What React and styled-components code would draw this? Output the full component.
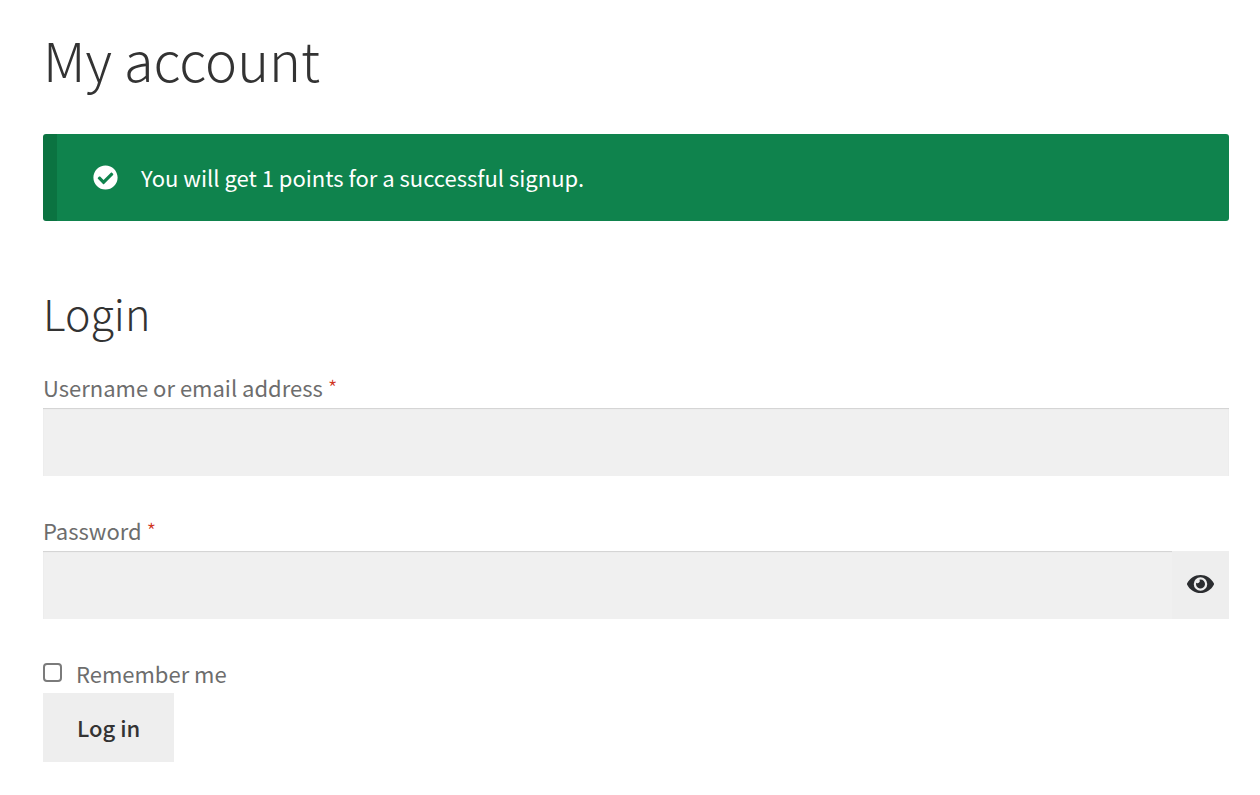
import React, { useState } from "react";
import styled, { createGlobalStyle } from "styled-components";
import { FaCheckCircle, FaEye } from "react-icons/fa";

const GlobalStyle = createGlobalStyle`
  *, *::before, *::after {
    box-sizing: border-box;
  }
  body {
    margin: 0;
    background: #fff;
    color: #6d6d6d;
    font-family: "Noto Sans CJK JP", "Noto Sans", sans-serif;
    font-size: 22px;
    line-height: 36px;
  }
`;

const Page = styled.main`
  padding: 20px 31px 32px 43px;
`;

const Title = styled.h1`
  margin: 0 0 36px;
  color: #333;
  font-size: 54px;
  font-weight: 300;
  line-height: 78px;
`;

const Heading = styled.h2`
  margin: 0 0 28px;
  color: #333;
  font-size: 43px;
  font-weight: 300;
  line-height: 58px;
`;

const Notice = styled.div`
  display: flex;
  align-items: center;
  gap: 23px;
  min-height: 87px;
  margin-bottom: 62px;
  padding: 0 36px;
  border-left: 14px solid #0b7341;
  border-radius: 3px;
  background: #0f834d;
  color: #fff;

  svg {
    flex: none;
    width: 25px;
    height: 25px;
  }
`;

const NoticeText = styled.span`
  padding-bottom: 2px;
`;

const Field = styled.div`
  margin-bottom: 36px;
`;

const Label = styled.label`
  display: block;
  margin-bottom: 3px;
`;

const Required = styled.span`
  color: #d0351f;
  font-weight: 300;
`;

const InputWrap = styled.div`
  position: relative;
`;

const Input = styled.input`
  display: block;
  width: 100%;
  height: 68px;
  padding: 0 22px;
  border: 0;
  border-radius: 0;
  background: #f0f0f0;
  box-shadow: inset 0 1px 1px rgba(0, 0, 0, 0.125);
  color: #43454b;
  font: inherit;
`;

const ToggleButton = styled.button`
  position: absolute;
  top: 0;
  right: 0;
  bottom: 0;
  display: flex;
  align-items: center;
  justify-content: center;
  width: 57px;
  padding: 0 0 2px;
  border: 0;
  background: #eee;
  color: #2b2d30;
  cursor: pointer;

  svg {
    width: 27px;
    height: 24px;
  }
`;

const Remember = styled.label`
  display: flex;
  align-items: center;
  gap: 14px;
  width: fit-content;
  margin-bottom: 2px;
`;

const Checkbox = styled.input`
  appearance: none;
  width: 19px;
  height: 19px;
  margin: 0 0 2px;
  border: 2px solid #7b7b7b;
  border-radius: 4px;
  background: #fff;

  &:checked {
    background: #0f834d;
  }
`;

const SubmitButton = styled.button`
  display: block;
  height: 69px;
  padding: 0 34px 2px;
  border: 0;
  background: #eee;
  color: #333;
  font: inherit;
  font-weight: 500;
  cursor: pointer;
`;

const App = () => {
  const [visible, setVisible] = useState(false);

  return (
    <Page>
      <GlobalStyle />
      <Title>My account</Title>
      <Notice role="status">
        <FaCheckCircle aria-hidden="true" />
        <NoticeText>You will get 1 points for a successful signup.</NoticeText>
      </Notice>
      <Heading>Login</Heading>
      <form onSubmit={e => e.preventDefault()}>
        <Field>
          <Label htmlFor="username">
            Username or email address <Required>*</Required>
          </Label>
          <Input id="username" type="text" autoComplete="username" />
        </Field>
        <Field>
          <Label htmlFor="password">
            Password <Required>*</Required>
          </Label>
          <InputWrap>
            <Input
              id="password"
              type={visible ? "text" : "password"}
              autoComplete="current-password"
            />
            <ToggleButton
              type="button"
              aria-label="Show password"
              onClick={() => setVisible(!visible)}
            >
              <FaEye />
            </ToggleButton>
          </InputWrap>
        </Field>
        <Remember>
          <Checkbox type="checkbox" />
          Remember me
        </Remember>
        <SubmitButton type="submit">Log in</SubmitButton>
      </form>
    </Page>
  );
};

export default App;
